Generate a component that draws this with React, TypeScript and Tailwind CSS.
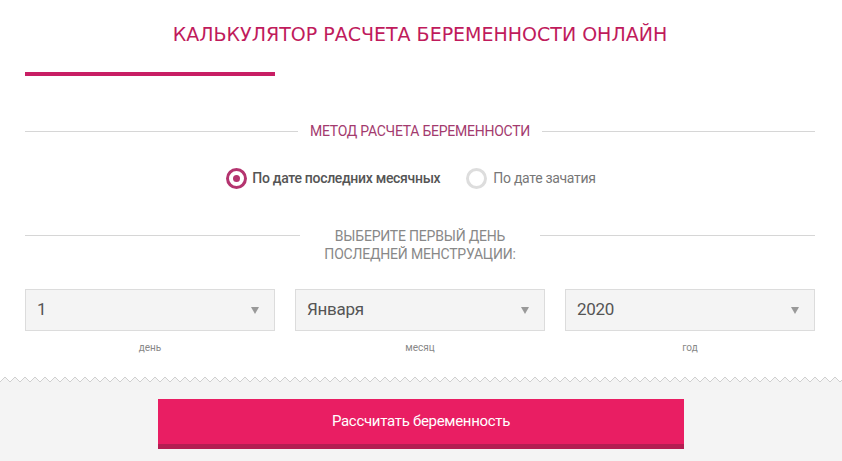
import React from 'react';

const cond = { fontFamily: 'Roboto, "Liberation Sans", sans-serif' };

const Divider: React.FC<{ children: React.ReactNode; className?: string }> = ({ children, className }) => (
  <div className={`flex items-center gap-[10px] ${className ?? ''}`}>
    <div className="flex-1 h-px bg-[#d6d6d6]" />
    <div className="text-center">{children}</div>
    <div className="flex-1 h-px bg-[#d6d6d6]" />
  </div>
);

const Select: React.FC<{ value: string; label: string }> = ({ value, label }) => (
  <div className="flex flex-col items-center">
    <div className="w-full h-[42px] bg-[#f4f4f4] border border-[#dcdcdc] flex items-center justify-between pl-[11px] pr-[15px]">
      <span className="text-[17px] text-[#555] tracking-[-0.3px]">{value}</span>
      <svg width="8" height="7" viewBox="0 0 8 7"><path d="M0 0h8L4 7z" fill="#999" /></svg>
    </div>
    <span className="mt-[9px] text-[10px] text-[#888]">{label}</span>
  </div>
);

export default function App() {
  return (
    <div className="w-[842px] h-[461px] bg-white overflow-hidden flex flex-col" style={cond}>
      <div className="pl-[25px] pr-[27px]">
        <h1
          className="pt-[20px] text-center text-[19px] leading-[28px] text-[#c01b5c]"
          style={{ fontFamily: '"DejaVu Sans", sans-serif' }}
        >
          КАЛЬКУЛЯТОР РАСЧЕТА БЕРЕМЕННОСТИ ОНЛАЙН
        </h1>
        <div className="mt-[24px] w-[250px] h-[4px] bg-[#c81e64]" />

        <Divider className="mt-[43px]">
          <span className="text-[14px] text-[#a33a6e] tracking-[-0.25px] px-[2px]">МЕТОД РАСЧЕТА БЕРЕМЕННОСТИ</span>
        </Divider>

        <div className="mt-[25px] pr-[18px] flex justify-center items-center gap-[9px] text-[14px] tracking-[-0.3px]">
          <div className="flex items-center gap-[5px]">
            <div className="w-[21px] h-[21px] rounded-full border-[3px] border-[#b4346f] flex items-center justify-center">
              <div className="w-[7px] h-[7px] rounded-full bg-[#b4346f]" />
            </div>
            <span className="font-medium text-[#555]">По дате последних месячных</span>
          </div>
          <div className="flex items-center gap-[6px] ml-[17px]">
            <div className="w-[21px] h-[21px] rounded-full border-[3px] border-[#ddd]" />
            <span className="text-[#777]">По дате зачатия</span>
          </div>
        </div>

        <Divider className="mt-[46px] items-start">
          <div className="text-[14px] leading-[18px] text-[#888] tracking-[-0.2px] px-[14px] -mt-[8px]">
            ВЫБЕРИТЕ ПЕРВЫЙ ДЕНЬ
            <br />
            ПОСЛЕДНЕЙ МЕНСТРУАЦИИ:
          </div>
        </Divider>

        <div className="mt-[26px] grid grid-cols-3 gap-[20px]">
          <Select value="1" label="день" />
          <Select value="Января" label="месяц" />
          <Select value="2020" label="год" />
        </div>
      </div>

      <svg className="mt-[21px] block w-full h-[8px] shrink-0" viewBox="0 0 842 8" preserveAspectRatio="none">
        <defs>
          <pattern id="zz" width="10" height="8" patternUnits="userSpaceOnUse">
            <path d="M0 6 L5 1 L10 6 L10 8 L0 8 Z" fill="#f4f4f4" />
            <path d="M0 6 L5 1 L10 6" fill="none" stroke="#cfcfcf" strokeWidth="1" />
          </pattern>
        </defs>
        <rect width="842" height="8" fill="url(#zz)" />
      </svg>

      <div className="flex-1 bg-[#f4f4f4] flex justify-center pt-[15px]">
        <button className="w-[526px] h-[50px] bg-[#e91e63] border-b-[5px] border-[#b41e52] text-white text-[15px] tracking-[-0.3px]">
          Рассчитать беременность
        </button>
      </div>
    </div>
  );
}
